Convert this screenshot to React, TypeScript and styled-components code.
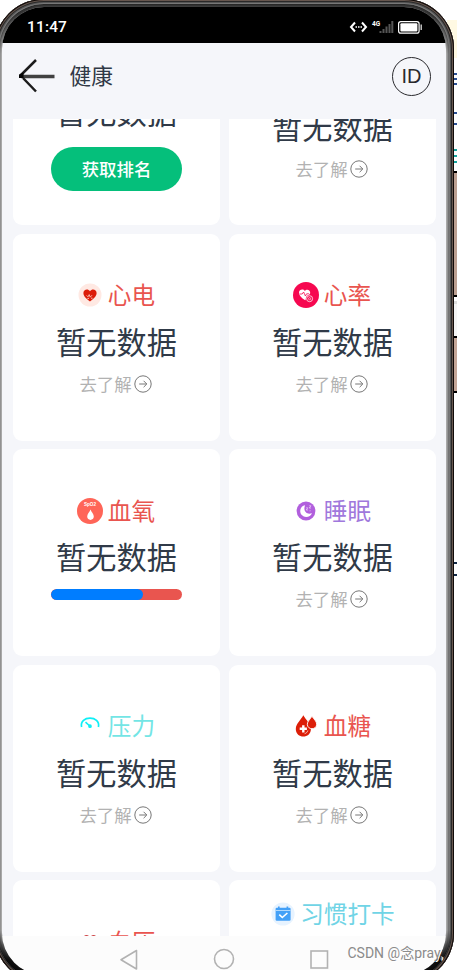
import React from 'react';
import styled, { createGlobalStyle, css } from 'styled-components';

const GlobalStyle = createGlobalStyle`
  * { box-sizing: border-box; }
  html, body { margin: 0; padding: 0; overflow: hidden; background: #fff; }
  body { font-family: "Noto Sans CJK SC", "Noto Sans", sans-serif; }
  svg { display: block; }
`;

const Stage = styled.div`
  position: relative;
  width: 457px;
  height: 970px;
  overflow: hidden;
  background: #fff;
`;

const Backdrop = styled.div`
  position: absolute;
  top: 0;
  right: 0;
  width: 10px;
  height: 970px;
  display: flex;
  flex-direction: column;
`;

const Strip = styled.div<{ $h: number; $bg?: string }>`
  flex: none;
  height: ${(p) => p.$h}px;
  background: ${(p) => p.$bg ?? 'transparent'};
`;

const Device = styled.div`
  position: relative;
  flex: none;
  width: 460px;
  height: 984px;
  margin: -1px 0 0 -6px;
  padding: 8px;
  border-radius: 50px;
  background: #999;
  box-shadow:
    inset 0 0 0 1px #110b09,
    inset 0 0 0 2px #66564e,
    inset 0 0 0 3px #292828,
    inset 0 0 0 4px #555,
    inset 0 0 0 5px #777,
    inset 0 0 0 6px #737373,
    inset 0 0 0 7px #929292,
    inset 0 0 0 8px #a9a9a9;
`;

const CapShade = styled.div<{ $bottom?: boolean }>`
  position: absolute;
  left: 0;
  right: 0;
  height: 50px;
  border: 5px solid #000;
  ${(p) =>
    p.$bottom
      ? css`bottom: 3px; left: 3px; right: 3px; border-top: 0; border-radius: 0 0 47px 47px; opacity: .9;
          mask-image: linear-gradient(transparent, #000 60%);`
      : css`top: 5px; left: 5px; right: 5px; border-width: 3px; border-bottom: 0; border-radius: 45px 45px 0 0; opacity: .65;
          mask-image: linear-gradient(#000 20%, transparent);`}
`;

const Screen = styled.div`
  height: 968px;
  border-radius: 42px;
  overflow: hidden;
  display: flex;
  flex-direction: column;
  background: #f5f6fa;
`;

const StatusBar = styled.div`
  flex: none;
  height: 36px;
  padding: 3px 23px 0 25px;
  display: flex;
  align-items: center;
  justify-content: space-between;
  background: #000;
  color: #fff;
`;

const Clock = styled.span`
  font: 500 15.4px/20px Roboto, sans-serif;
  letter-spacing: .2px;
`;

const Header = styled.header`
  flex: none;
  height: 76px;
  padding: 0 15px 10px 16px;
  display: flex;
  align-items: center;
`;

const PageTitle = styled.h1`
  flex: 1;
  margin: -3px 0 0 13.5px;
  font-size: 21.7px;
  line-height: 30px;
  font-weight: 400;
  color: #303946;
`;

const IdBadge = styled.div`
  width: 39px;
  height: 39px;
  border: 1px solid #29292d;
  border-radius: 50%;
  display: flex;
  align-items: center;
  justify-content: center;
  font: 400 20px/20px "Liberation Sans", sans-serif;
  color: #29292d;
`;

const Scroller = styled.main`
  flex: none;
  height: 817px;
  overflow: hidden;
`;

const Cards = styled.div`
  display: grid;
  grid-template-columns: 207px 207px;
  grid-auto-rows: 206.8px;
  gap: 8.7px 9px;
  margin: -100.5px 0 0 11px;
`;

const Card = styled.section<{ $top: number }>`
  display: flex;
  flex-direction: column;
  align-items: center;
  padding-top: ${(p) => p.$top}px;
  border-radius: 9px;
  background: #fff;
`;

const CardTitle = styled.div<{ $color: string }>`
  display: flex;
  align-items: center;
  gap: 5px;
  height: 36px;
  font-size: 23.6px;
  line-height: 36px;
  color: ${(p) => p.$color};
  white-space: nowrap;
`;

const TitleText = styled.span`
  margin: -2px .6px 0 -.6px;
`;

const Value = styled.div`
  margin-top: 5.5px;
  font-size: 30.2px;
  line-height: 44px;
  color: #303a48;
`;

const Link = styled.div`
  display: flex;
  align-items: center;
  gap: 2px;
  margin: 8px 2px 0 0;
  font-size: 17.4px;
  line-height: 26px;
  color: #b2b2b2;
`;

const RankButton = styled.button`
  width: 131px;
  height: 44px;
  margin-top: 14px;
  padding: 0;
  border: 0;
  border-radius: 22px;
  background: #05bf7b;
  color: #fff;
  font: 500 17.4px/42px "Noto Sans CJK SC", sans-serif;
`;

const Track = styled.div`
  width: 131px;
  height: 11px;
  margin-top: 10.4px;
  border-radius: 6px;
  overflow: hidden;
  background: #e9554f;
`;

const Fill = styled.div`
  width: 70%;
  height: 100%;
  border-radius: 6px;
  background: #007dff;
`;

const NavBar = styled.nav`
  flex: 1;
  display: flex;
  align-items: flex-start;
  justify-content: space-between;
  padding: 12px 117.5px 0 117px;
  background: #fcfcfc;
`;

const Watermark = styled.div`
  position: absolute;
  left: 347.5px;
  top: 944px;
  font: 400 14px/18px Roboto, "Noto Sans CJK SC", sans-serif;
  color: #8b8b8b;
  text-shadow: 1px 1px #fff;
  white-space: nowrap;
`;

const BackArrow = () => (
  <svg width="38" height="36" viewBox="0 0 38 36" fill="none">
    <path d="M3 18.5H36.5" stroke="#414141" strokeWidth="3.5" />
    <path d="M18 2L3 17M5 20L18 33.5" stroke="#1c1c1c" strokeWidth="2.5" />
    <path d="M1 16.5L5.5 14.5V20H1Z" fill="#050505" />
  </svg>
);

const StatusIcons = () => (
  <svg width="74" height="16" viewBox="349 19 74 16" fill="none">
    <path d="M355 22.5L351 27L355 31.5M362 22.5L366 27L362 31.5" stroke="#fff" strokeWidth="2" />
    <path d="M355.5 27H357M358 27H359.5M360.5 27H362" stroke="#fff" strokeWidth="1.6" />
    <text x="372" y="25.5" fill="#fff" fontFamily="Roboto" fontWeight="700" fontSize="6.5">4G</text>
    <path d="M380.5 33V31M383.5 33V29M386.5 33V26.5M389.5 33V24M392.3 33V21" stroke="#555" strokeWidth="2" />
    <rect x="398.6" y="21.6" width="20.5" height="11.5" rx="2.2" stroke="#fff" strokeWidth="1.2" />
    <rect x="400.4" y="23.3" width="17" height="8.2" rx="1" fill="#fff" />
    <path d="M421.2 24.5V30" stroke="#ddd" strokeWidth="1.3" />
  </svg>
);

const CircleArrow = () => (
  <svg width="18" height="18" viewBox="0 0 18 18" fill="none" stroke="#777">
    <circle cx="9" cy="9" r="8.2" strokeWidth="1" />
    <path d="M5.2 9H12.6M9.6 5.8L12.8 9L9.6 12.2" strokeWidth="1" />
  </svg>
);

const heart = 'M13 19.4C9.5 16.8 6.4 14.3 6.4 11C6.4 7.3 11 6.2 13 9.2C15 6.2 19.6 7.3 19.6 11C19.6 14.3 16.5 16.8 13 19.4Z';

type IconName = 'ecg' | 'heart' | 'oxygen' | 'sleep' | 'stress' | 'sugar' | 'pressure' | 'habit';

const glyphs: Record<IconName, React.ReactNode> = {
  ecg: (
    <>
      <circle cx="13" cy="13" r="11.5" fill="#ffe9e3" />
      <path d={heart} fill="#dc1d0a" />
      <path d="M9.6 13.4L11 14.8L12.2 12.6L13.2 15.2L15 13.2" stroke="#ffe9e3" strokeWidth=".7" fill="none" />
      <path d="M10.4 16.4H12M14 16.2H15.5" stroke="#ffe9e3" strokeWidth=".8" />
    </>
  ),
  heart: (
    <>
      <circle cx="13" cy="13" r="13" fill="#f60850" />
      <path d="M12.2 18.3C8.3 15.6 6 13.4 6 10.9C6 7.2 10.4 6.6 11.8 9C13.4 6.6 17.6 7.5 17.2 11.2L12.2 18.3Z" fill="#fff" />
      <path d="M6.5 12H9.2L10.6 10L12.4 14L13.6 11.8H16" stroke="#f60850" strokeWidth=".8" fill="none" />
      <circle cx="16.6" cy="16.7" r="3.8" fill="#f60850" />
      <circle cx="16.6" cy="16.7" r="3" fill="#f60850" stroke="#ffd8e3" strokeWidth=".9" />
      <circle cx="16.6" cy="16.7" r="1.1" fill="none" stroke="#ffd8e3" strokeWidth=".7" />
    </>
  ),
  oxygen: (
    <>
      <circle cx="13" cy="13" r="13" fill="#ff6558" />
      <text x="13" y="8.4" fill="#fff" fontFamily="Liberation Sans" fontWeight="700" fontSize="4.6" textAnchor="middle">SpO2</text>
      <path d="M13.5 11.6C14.5 14.3 16.8 16.1 16.8 18.6C16.8 23 10.2 23 10.2 18.6C10.2 16.1 12.5 14.3 13.5 11.6Z" fill="#fff" />
    </>
  ),
  sleep: (
    <>
      <circle cx="13" cy="13" r="9.4" fill="#b15fdd" />
      <path d="M12.1 7.2C7.6 7.5 5.6 13.7 8.8 17.1C12 20.5 18 18.8 18.9 14.9C15.5 17.3 9.3 14.3 12.1 7.2Z" fill="#fff" />
      <path d="M13.2 9.8H14.8L13.2 12H15M16.2 7.8H18L16.2 10H18M16.6 12.8H17.6" stroke="#e8c9f5" strokeWidth=".8" fill="none" />
    </>
  ),
  stress: (
    <g fill="none" stroke="#0eeff6">
      <path d="M4.6 14C2 2.2 24 2.2 21.4 14" strokeWidth="1.7" />
      <path d="M8.5 9.2L12.8 13" strokeWidth="1.6" />
      <circle cx="13" cy="13.2" r="1" strokeWidth="1.7" />
    </g>
  ),
  sugar: (
    <>
      <path d="M10.3 2.3C12.5 6.4 17.9 10.8 17.9 16C17.9 26 2.8 26 2.8 16C2.8 11 8 6.7 10.3 2.3Z" fill="#dc1e08" />
      <path d="M18.9 3.1C20.6 6.1 23.7 8.2 23.7 11.2C23.7 17.2 14.3 17.2 14.3 11.2C14.3 8.2 17.6 6.1 18.9 3.1Z" fill="#dc1e08" stroke="#fff" strokeWidth=".9" />
      <path d="M10.3 12.2V19.4M6.7 15.8H13.9" stroke="#fff" strokeWidth="2.4" />
      <path d="M14.8 17.5C14.3 19.4 13.1 20.3 11.6 20.7" stroke="#fff" strokeWidth=".7" fill="none" />
    </>
  ),
  pressure: (
    <path d="M13 21C7 17 5 13 6 9C7 5 11.5 5 13 8.6C14.5 5 19 5 20 9C21 13 19 17 13 21Z" fill="#ce4446" />
  ),
  habit: (
    <>
      <circle cx="13" cy="13" r="11.6" fill="#e7f3ff" />
      <rect x="5.6" y="6.8" width="15" height="13" rx="1.2" fill="#43a0f7" />
      <path d="M5.8 9.5H20.4" stroke="#cde6fd" strokeWidth=".8" />
      <path d="M8.8 5.4V8.8M17.4 5.4V8.8" stroke="#43a0f7" strokeWidth="1.7" />
      <path d="M9.3 13.6L12.3 16.5L17.4 12" stroke="#fff" strokeWidth="1.6" fill="none" />
    </>
  ),
};

const CardIcon = ({ name }: { name: IconName }) => (
  <svg width="26" height="26" viewBox="0 0 26 26">{glyphs[name]}</svg>
);

const LearnMore = () => (
  <Link>去了解<CircleArrow /></Link>
);

type Metric = { icon: IconName; label: string; color: string; top?: number; action?: 'rank' | 'progress' };

const metrics: Metric[] = [
  { icon: 'heart', label: '排名', color: '#e9554f', top: 28.5, action: 'rank' },
  { icon: 'heart', label: '体重', color: '#e9554f' },
  { icon: 'ecg', label: '心电', color: '#e9554f' },
  { icon: 'heart', label: '心率', color: '#e9554f' },
  { icon: 'oxygen', label: '血氧', color: '#e9554f', action: 'progress' },
  { icon: 'sleep', label: '睡眠', color: '#a078dc' },
  { icon: 'stress', label: '压力', color: '#73e5e5' },
  { icon: 'sugar', label: '血糖', color: '#e9554f' },
  { icon: 'pressure', label: '血压', color: '#e9554f' },
  { icon: 'habit', label: '习惯打卡', color: '#70d4e6', top: 16 },
];

const MetricCard = ({ icon, label, color, top = 43.5, action }: Metric) => (
  <Card $top={top}>
    <CardTitle $color={color}><CardIcon name={icon} /><TitleText>{label}</TitleText></CardTitle>
    <Value>暂无数据</Value>
    {action === 'rank' && <RankButton>获取排名</RankButton>}
    {action === 'progress' && <Track><Fill /></Track>}
    {!action && <LearnMore />}
  </Card>
);

const strips: [number, string?][] = [
  [20], [38, '#fff9e3'], [15], [2, '#2b5095'], [3], [2, '#2b5095'], [3], [2, '#2b5095'],
  [27], [2, '#2b5095'], [9], [2, '#2b5095'], [24], [2, '#16a5a0'], [4], [2, '#16a5a0'],
  [4], [2, '#16a5a0'], [8], [2, '#000'], [122, '#bca092'], [2, '#000'], [4], [3, '#ddd'],
  [32, '#f5f5f5'], [2, '#000'], [53, '#c4a698'], [2, '#000'], [169], [2, '#122946'], [10], [2, '#122946'],
];

export default function App() {
  return (
    <>
      <GlobalStyle />
      <Stage>
        <Backdrop>
          {strips.map(([h, bg], i) => <Strip key={i} $h={h} $bg={bg} />)}
        </Backdrop>
        <Device>
          <Screen>
            <StatusBar><Clock>11:47</Clock><StatusIcons /></StatusBar>
            <Header>
              <BackArrow />
              <PageTitle>健康</PageTitle>
              <IdBadge>ID</IdBadge>
            </Header>
            <Scroller>
              <Cards>{metrics.map((m) => <MetricCard key={m.label} {...m} />)}</Cards>
            </Scroller>
            <NavBar>
              <svg width="20" height="24" viewBox="0 0 20 24" fill="none" stroke="#b2b2b2" strokeWidth="1.6">
                <path d="M17.5 2.5V21L2 11.7Z" strokeLinejoin="round" />
              </svg>
              <svg width="22" height="22" viewBox="0 0 22 22" fill="none" stroke="#b2b2b2" strokeWidth="1.6">
                <circle cx="11" cy="11" r="9.5" />
              </svg>
              <svg width="20" height="22" viewBox="0 0 20 22" fill="none" stroke="#b2b2b2" strokeWidth="1.6">
                <rect x="2" y="3" width="16.5" height="17" />
              </svg>
            </NavBar>
          </Screen>
          <CapShade />
          <CapShade $bottom />
        </Device>
        <Watermark>CSDN @念pray,</Watermark>
      </Stage>
    </>
  );
}
